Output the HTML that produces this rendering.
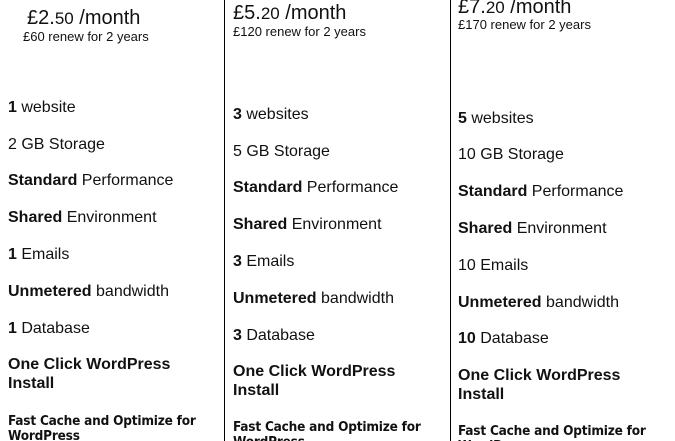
<!DOCTYPE html>
<html><head><style>
html,body{margin:0;width:675px;height:441px;overflow:hidden}
body{background:#fff;position:relative;font-family:"Liberation Sans",sans-serif;color:#111}
.l{position:absolute;top:0;height:441px;width:1px;background:#000}
.t{position:absolute;font-size:16px;line-height:20px;white-space:nowrap}
.p{position:absolute;font-size:20px;line-height:22px;white-space:nowrap}
.p small{font-size:17px}
.r{position:absolute;font-size:13px;line-height:14px;white-space:nowrap}
.w{position:absolute;font-size:16px;line-height:19px;font-weight:bold;white-space:nowrap}
.f{position:absolute;font-family:"DejaVu Sans Condensed","DejaVu Sans",sans-serif;font-size:13.5px;line-height:15px;font-weight:bold;white-space:nowrap;letter-spacing:-0.2px}
</style></head><body>
<div class="l" style="left:224px"></div>
<div class="l" style="left:450px"></div>

<div class="p" style="left:27px;top:7px">£2.<small>50</small> /month</div>
<div class="r" style="left:23px;top:30px">£60 renew for 2 years</div>
<div class="t" style="left:8px;top:98px"><b>1</b> website</div>
<div class="t" style="left:8px;top:135px">2 GB Storage</div>
<div class="t" style="left:8px;top:171px"><b>Standard</b> Performance</div>
<div class="t" style="left:8px;top:208px"><b>Shared</b> Environment</div>
<div class="t" style="left:8px;top:245px"><b>1</b> Emails</div>
<div class="t" style="left:8px;top:282px"><b>Unmetered</b> bandwidth</div>
<div class="t" style="left:8px;top:319px"><b>1</b> Database</div>
<div class="w" style="left:8px;top:355px">One Click WordPress<br>Install</div>
<div class="f" style="left:8px;top:414px">Fast Cache and Optimize for<br>WordPress</div>

<div class="p" style="left:233px;top:2px">£5.<small>20</small> /month</div>
<div class="r" style="left:233px;top:25px">£120 renew for 2 years</div>
<div class="t" style="left:233px;top:105px"><b>3</b> websites</div>
<div class="t" style="left:233px;top:142px">5 GB Storage</div>
<div class="t" style="left:233px;top:178px"><b>Standard</b> Performance</div>
<div class="t" style="left:233px;top:215px"><b>Shared</b> Environment</div>
<div class="t" style="left:233px;top:252px"><b>3</b> Emails</div>
<div class="t" style="left:233px;top:289px"><b>Unmetered</b> bandwidth</div>
<div class="t" style="left:233px;top:326px"><b>3</b> Database</div>
<div class="w" style="left:233px;top:362px">One Click WordPress<br>Install</div>
<div class="f" style="left:233px;top:420px">Fast Cache and Optimize for<br>WordPress</div>

<div class="p" style="left:458px;top:-4px">£7.<small>20</small> /month</div>
<div class="r" style="left:458px;top:18px">£170 renew for 2 years</div>
<div class="t" style="left:458px;top:109px"><b>5</b> websites</div>
<div class="t" style="left:458px;top:145px">10 GB Storage</div>
<div class="t" style="left:458px;top:182px"><b>Standard</b> Performance</div>
<div class="t" style="left:458px;top:219px"><b>Shared</b> Environment</div>
<div class="t" style="left:458px;top:256px">10 Emails</div>
<div class="t" style="left:458px;top:293px"><b>Unmetered</b> bandwidth</div>
<div class="t" style="left:458px;top:329px"><b>10</b> Database</div>
<div class="w" style="left:458px;top:366px">One Click WordPress<br>Install</div>
<div class="f" style="left:458px;top:424px">Fast Cache and Optimize for<br>WordPress</div>
</body></html>
